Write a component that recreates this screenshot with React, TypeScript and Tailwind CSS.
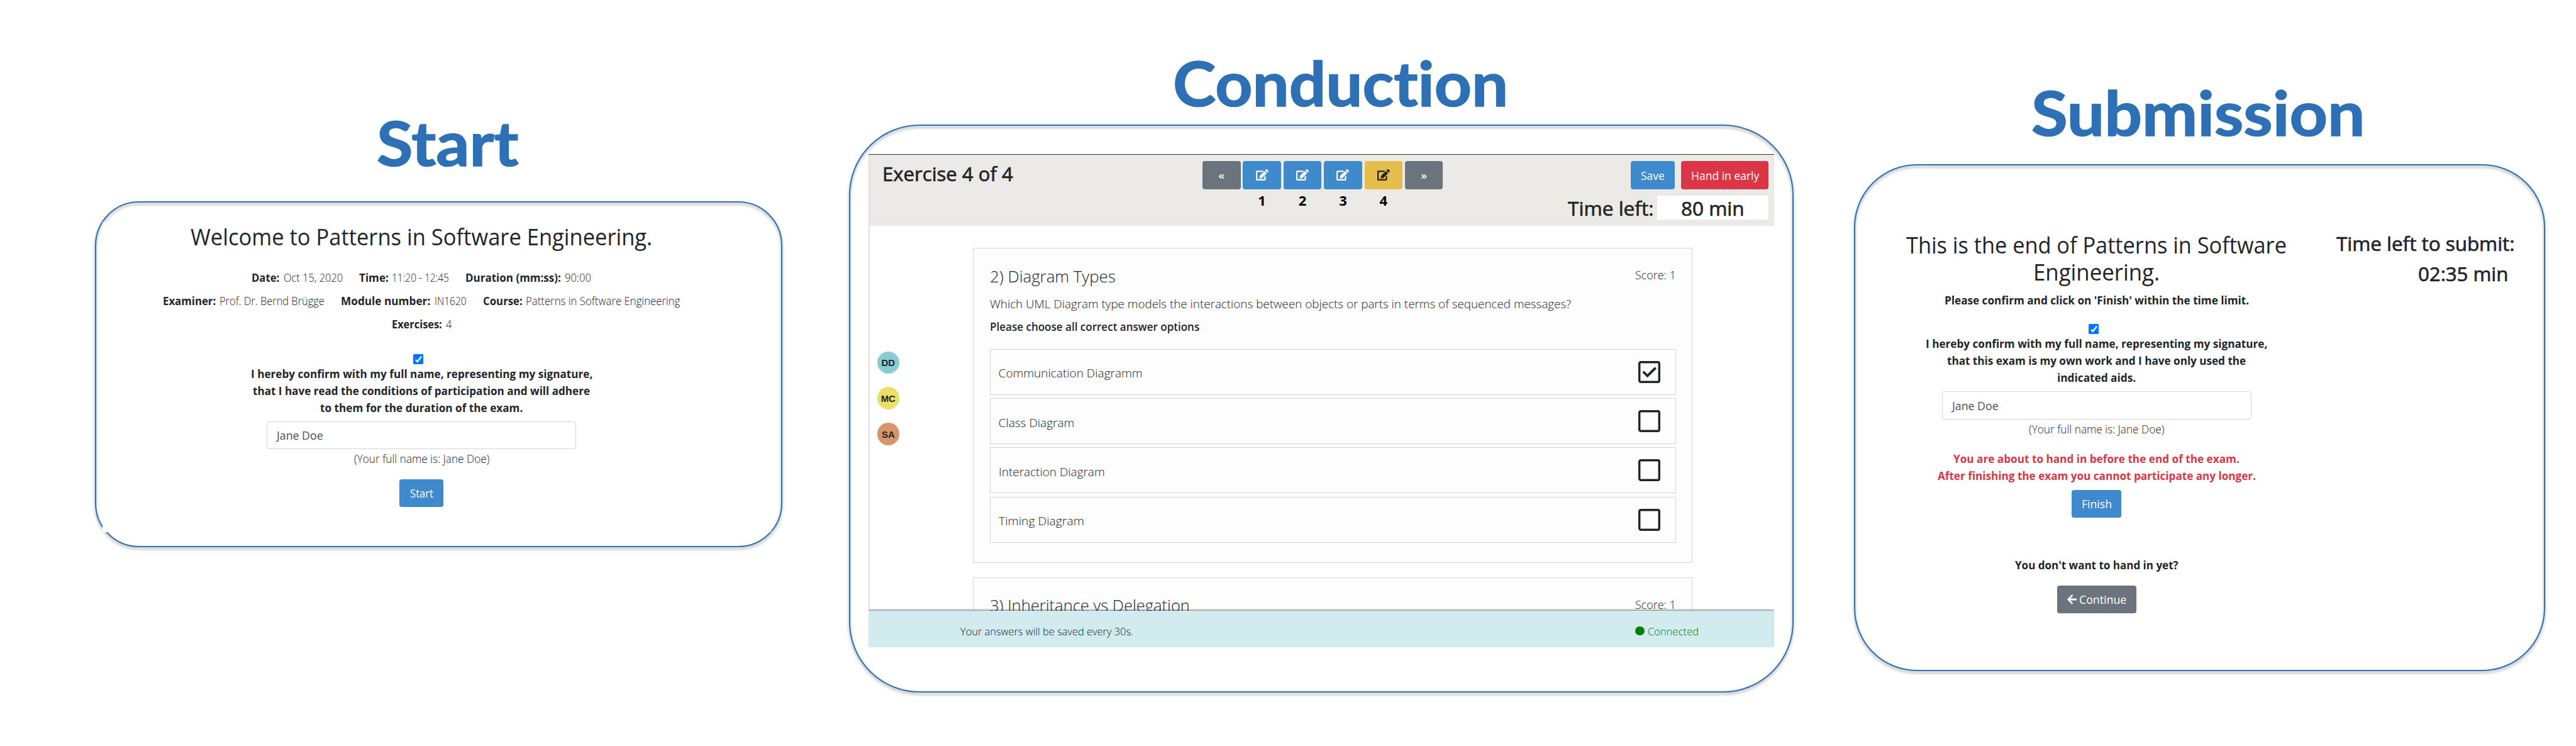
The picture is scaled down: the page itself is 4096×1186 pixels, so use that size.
import { useLayoutEffect, useRef, useState } from "react";
import type { ReactNode } from "react";
import { FaArrowLeft, FaEdit } from "react-icons/fa";

/** Single line of text whose glyphs are stretched to the width of its box. */
function Fit({ className = "", children }: { className?: string; children: ReactNode }) {
  const outer = useRef<HTMLSpanElement>(null);
  const inner = useRef<HTMLSpanElement>(null);
  const [scale, setScale] = useState(1);
  useLayoutEffect(() => {
    if (outer.current && inner.current && inner.current.offsetWidth > 0) {
      setScale(outer.current.getBoundingClientRect().width / inner.current.offsetWidth);
    }
  }, []);
  return (
    <span ref={outer} className={`block shrink-0 ${className}`}>
      <span
        ref={inner}
        className="inline-block origin-left whitespace-nowrap align-top"
        style={{ transform: `translateY(0.5px) scaleX(${scale})` }}
      >
        {children}
      </span>
    </span>
  );
}

function Heading({ className, children }: { className: string; children: ReactNode }) {
  return (
    <h1 className="font-['Lato'] text-[97px] leading-[100px] font-bold text-[#2e70b5] [font-variant-ligatures:none] [-webkit-text-stroke:1.6px_#2e70b5]">
      <Fit className={className}>{children}</Fit>
    </h1>
  );
}

function Panel({ size, radius, children }: { size: string; radius: string; children: ReactNode }) {
  return (
    <div className={`relative ${size}`}>
      <div
        className={`pointer-events-none absolute inset-0 border-2 border-[#2e70b5] drop-shadow-[0_3px_2px_rgba(0,0,0,0.4)] ${radius}`}
      />
      <div className="relative h-full">{children}</div>
    </div>
  );
}

function TickBox() {
  return (
    <svg viewBox="0 0 29 29" className="mr-[10px] block size-[16.3px]">
      <rect width="29" height="29" rx="4" fill="#0075ff" />
      <path d="M6.5 16 L11.7 21.2 L23.3 6.6" fill="none" stroke="#fff" strokeWidth="4.2" />
    </svg>
  );
}

function AnswerBox({ checked }: { checked: boolean }) {
  return (
    <svg viewBox="0 0 35 35" className="size-[35px]">
      <rect x="1.7" y="1.7" width="31.6" height="31.6" rx="2.2" fill="none" stroke="#212529" strokeWidth="3.4" />
      {checked && (
        <path
          d="M6.8 18 L9 16 L14.5 21.2 L26.3 9.7 L28.6 12 L14.5 25.9 Z"
          fill="#212529"
          stroke="#212529"
          strokeWidth="0.9"
          strokeLinejoin="round"
        />
      )}
    </svg>
  );
}

function NameInput({ size }: { size: string }) {
  return (
    <div className={`flex items-center rounded-[4px] border border-[#ced4da] bg-white pl-[15px] text-[#495057] ${size}`}>
      <Fit className="w-[74px]">Jane Doe</Fit>
    </div>
  );
}

function Pair({ label, value, lw, vw }: { label: string; value: string; lw: string; vw: string }) {
  return (
    <div className="flex gap-[6px]">
      <Fit className={`font-bold ${lw}`}>{label}</Fit>
      <Fit className={`font-light ${vw}`}>{value}</Fit>
    </div>
  );
}

function StartPanel() {
  return (
    <section className="ml-[151px] w-[1093px] pt-[176px]">
      <Heading className="ml-[448px] w-[226px]">Start</Heading>
      <div className="h-[43.5px]" />
      <Panel size="h-[550.5px] w-[1093px]" radius="rounded-[70px]">
        <div className="pt-[33px]">
          <div className="ml-[12px] flex h-[493px] w-[1063px] flex-col items-center bg-white pt-px pr-[49px]">
            <Fit className="w-[734px] text-[36px] leading-[44px] font-normal">
              Welcome to Patterns in Software Engineering.
            </Fit>
            <div className="mt-[29.5px] flex flex-col items-center gap-[10px]">
              <div className="flex gap-[26px]">
                <Pair label="Date:" value="Oct 15, 2020" lw="w-[44.5px]" vw="w-[94px]" />
                <Pair label="Time:" value="11:20 - 12:45" lw="w-[46.5px]" vw="w-[91px]" />
                <Pair label="Duration (mm:ss):" value="90:00" lw="w-[152px]" vw="w-[41.5px]" />
              </div>
              <div className="flex gap-[26px]">
                <Pair label="Examiner:" value="Prof. Dr. Bernd Brügge" lw="w-[84px]" vw="w-[167px]" />
                <Pair label="Module number:" value="IN1620" lw="w-[142.5px]" vw="w-[51px]" />
                <Pair label="Course:" value="Patterns in Software Engineering" lw="w-[62.5px]" vw="w-[245px]" />
              </div>
              <Pair label="Exercises:" value="4" lw="w-[80px]" vw="w-[9px]" />
            </div>
            <div className="mt-[35px] h-[16.5px]">
              <TickBox />
            </div>
            <div className="flex flex-col items-center font-bold">
              <Fit className="w-[543px]">I hereby confirm with my full name, representing my signature,</Fit>
              <Fit className="w-[536px]">that I have read the conditions of participation and will adhere</Fit>
              <Fit className="w-[322.5px]">to them for the duration of the exam.</Fit>
            </div>
            <div className="mt-[9px]">
              <NameInput size="h-[44.7px] w-[492px]" />
            </div>
            <Fit className="mt-[0.5px] w-[215px] font-light">(Your full name is: Jane Doe)</Fit>
            <button className="mt-[20px] flex h-[44px] w-[70px] items-center justify-center rounded-[4px] bg-[#3e8acc] text-white">
              <Fit className="w-[37px]">Start</Fit>
            </button>
          </div>
        </div>
      </Panel>
    </section>
  );
}

const pageButton = "flex h-[44.5px] w-[60.5px] items-center justify-center rounded-[4px]";

function ExerciseNav() {
  return (
    <nav className="flex gap-[3.9px] pt-[10.5px]">
      <div className={`${pageButton} bg-[#6b747d] text-white`}>
        <span className="text-[17px] font-semibold">«</span>
      </div>
      {[1, 2, 3, 4].map((n) => (
        <div key={n}>
          <div className={`${pageButton} ${n === 4 ? "bg-[#e5bd4a] text-[#212529]" : "bg-[#3e8acc] text-white"}`}>
            <FaEdit className="h-[18px] w-[20px]" />
          </div>
          <div className="mt-[2px] text-center text-[22px] leading-[30px] font-bold text-black">{n}</div>
        </div>
      ))}
      <div className={`${pageButton} bg-[#6b747d] text-white`}>
        <span className="text-[17px] font-semibold">»</span>
      </div>
    </nav>
  );
}

function QuestionTitle({ title, width }: { title: string; width: string }) {
  return (
    <div className="flex items-start justify-between font-light">
      <Fit className={`text-[26px] leading-[36px] ${width}`}>{title}</Fit>
      <Fit className="mt-[2.5px] w-[65px] text-[19px] leading-[28px]">Score: 1</Fit>
    </div>
  );
}

const answers = [
  { text: "Communication Diagramm", width: "w-[229px]", checked: true },
  { text: "Class Diagram", width: "w-[121px]", checked: false },
  { text: "Interaction Diagram", width: "w-[168.5px]", checked: false },
  { text: "Timing Diagram", width: "w-[135.5px]", checked: false },
];

const avatars = [
  { initials: "DD", color: "bg-[#86ccd2]" },
  { initials: "MC", color: "bg-[#ecdf66]" },
  { initials: "SA", color: "bg-[#d8946c]" },
];

function ConductionPanel() {
  return (
    <section className="ml-[106px] w-[1502px] pt-[81px]">
      <Heading className="ml-[515px] w-[533px]">Conduction</Heading>
      <div className="h-[17px]" />
      <Panel size="h-[903px] w-[1502px]" radius="rounded-[112px]">
        <div className="pt-[46.5px] pl-[31px]">
          <div className="w-[1439.5px]">
            <div className="h-px bg-[#33352f]" />
            <header className="flex h-[113px] border-l-2 border-[#e0e0e0] bg-[#ebeae6] pr-[8.5px] pl-[19.5px]">
              <Fit className="mt-[9.8px] w-[208px] text-[30.5px] leading-[40px] [-webkit-text-stroke:0.7px_#212529]">
                Exercise 4 of 4
              </Fit>
              <div className="ml-[301.5px]">
                <ExerciseNav />
              </div>
              <div className="ml-auto flex flex-col items-end pt-[10.5px]">
                <div className="flex gap-[10px] text-white">
                  <button className="flex h-[44.5px] w-[70px] items-center justify-center rounded-[4px] bg-[#3e8acc]">
                    <Fit className="w-[38px]">Save</Fit>
                  </button>
                  <button className="flex h-[44.5px] w-[139px] items-center justify-center rounded-[4px] bg-[#dc3545]">
                    <Fit className="w-[108px]">Hand in early</Fit>
                  </button>
                </div>
                <div className="mt-[10px] flex gap-[6px] text-[31.5px] leading-[38.6px] [-webkit-text-stroke:0.7px_#212529]">
                  <Fit className="w-[136.5px]">Time left:</Fit>
                  <div className="flex h-[38.4px] w-[177px] justify-center bg-white">
                    <Fit className="w-[101px]">80 min</Fit>
                  </div>
                </div>
              </div>
            </header>
            <main className="flex h-[612.5px] overflow-hidden border-l-2 border-[#e0e0e0]">
              <div className="ml-[11.5px] flex flex-col gap-[21.3px] pt-[200px]">
                {avatars.map((a) => (
                  <div
                    key={a.initials}
                    className={`flex size-[35.6px] items-center justify-center rounded-full font-['Liberation_Sans'] text-[15px] font-bold ${a.color}`}
                  >
                    {a.initials}
                  </div>
                ))}
              </div>
              <div className="ml-[117px] flex w-[1144px] shrink-0 flex-col gap-[22.3px] pt-[35.5px]">
                <div className="h-[501.3px] shrink-0 border border-[#d3d3d3] bg-[#fdfdfd] px-[25.5px] pt-[24.5px] text-[19px] leading-[28px]">
                  <QuestionTitle title="2) Diagram Types" width="w-[199.5px]" />
                  <Fit className="mt-[12px] w-[924px] font-light">
                    Which UML Diagram type models the interactions between objects or parts in terms of sequenced messages?
                  </Fit>
                  <Fit className="mt-[8.6px] w-[333px] text-[18px] font-semibold">
                    Please choose all correct answer options
                  </Fit>
                  <div className="mt-[22.8px] flex flex-col gap-[5.3px]">
                    {answers.map((a) => (
                      <div
                        key={a.text}
                        className="flex h-[73px] items-center justify-between border border-[#d3d3d3] pr-[23.5px] pl-[13px]"
                      >
                        <Fit className={`pt-[2px] font-light ${a.width}`}>{a.text}</Fit>
                        <AnswerBox checked={a.checked} />
                      </div>
                    ))}
                  </div>
                </div>
                <div className="h-[200px] shrink-0 border border-[#d3d3d3] bg-[#fdfdfd] px-[25.5px] pt-[24.5px]">
                  <QuestionTitle title="3) Inheritance vs Delegation" width="w-[317.5px]" />
                </div>
              </div>
            </main>
            <footer className="relative flex h-[57.5px] items-start justify-between bg-[#d1ebef] pt-[19px] pr-[120px] pl-[145.5px] text-[17px] leading-[26px] font-light shadow-[0_-1px_3px_rgba(0,0,0,0.6)] [clip-path:inset(-6px_0_0_0)]">
              <Fit className="w-[275px]">Your answers will be saved every 30s.</Fit>
              <div className="flex items-center gap-[5px] text-[#008000]">
                <span className="size-[14.8px] rounded-full bg-[#008000]" />
                <Fit className="w-[81px]">Connected</Fit>
              </div>
            </footer>
          </div>
        </div>
      </Panel>
    </section>
  );
}

function SubmissionPanel() {
  return (
    <section className="ml-[96px] w-[1099px] pt-[128px]">
      <Heading className="ml-[282px] w-[530px]">Submission</Heading>
      <div className="h-[33px]" />
      <Panel size="h-[806px] w-[1099px]" radius="rounded-[100px]">
        <div className="flex items-start">
          <div className="ml-[70px] flex w-[631.6px] flex-col items-center pt-[105.7px]">
            <div className="flex flex-col items-center text-[36px] leading-[43.6px]">
              <Fit className="w-[605px]">This is the end of Patterns in Software</Fit>
              <Fit className="w-[201px]">Engineering.</Fit>
            </div>
            <Fit className="mt-[9.6px] w-[484px] font-bold">Please confirm and click on 'Finish' within the time limit.</Fit>
            <div className="mt-[24.7px] h-[16.4px]">
              <TickBox />
            </div>
            <div className="flex flex-col items-center font-bold">
              <Fit className="w-[543px]">I hereby confirm with my full name, representing my signature,</Fit>
              <Fit className="w-[475px]">that this exam is my own work and I have only used the</Fit>
              <Fit className="w-[125.5px]">indicated aids.</Fit>
            </div>
            <div className="mt-[9.7px]">
              <NameInput size="h-[44.6px] w-[492.4px]" />
            </div>
            <Fit className="mt-px w-[215px] font-light">(Your full name is: Jane Doe)</Fit>
            <div className="mt-[20px] flex flex-col items-center font-bold text-[#dc3545]">
              <Fit className="w-[455px]">You are about to hand in before the end of the exam.</Fit>
              <Fit className="w-[506px]">After finishing the exam you cannot participate any longer.</Fit>
            </div>
            <button className="mt-[9.7px] flex h-[44.1px] w-[79.4px] items-center justify-center rounded-[4px] bg-[#3e8acc] text-white">
              <Fit className="w-[48px]">Finish</Fit>
            </button>
            <Fit className="mt-[61.4px] w-[260px] font-bold">You don't want to hand in yet?</Fit>
            <button className="mt-[19.7px] flex h-[44.6px] w-[126.6px] items-center justify-center gap-[4px] rounded-[4px] bg-[#6b747d] text-white">
              <FaArrowLeft className="h-[18px] w-[15.6px]" />
              <Fit className="w-[75px]">Continue</Fit>
            </button>
          </div>
          <div className="ml-[65px] flex w-[284px] flex-col items-end pt-[100.6px] text-[30.5px] leading-[48.2px] [-webkit-text-stroke:0.7px_#212529]">
            <Fit className="w-[284px]">Time left to submit:</Fit>
            <Fit className="mr-[11px] w-[143px]">02:35 min</Fit>
          </div>
        </div>
      </Panel>
    </section>
  );
}

export default function App() {
  return (
    <div className="flex h-[1186px] w-[4096px] items-start overflow-hidden bg-white font-['Open_Sans','Noto_Sans',sans-serif] text-[18px] leading-[27px] text-[#212529]">
      <StartPanel />
      <ConductionPanel />
      <SubmissionPanel />
    </div>
  );
}
